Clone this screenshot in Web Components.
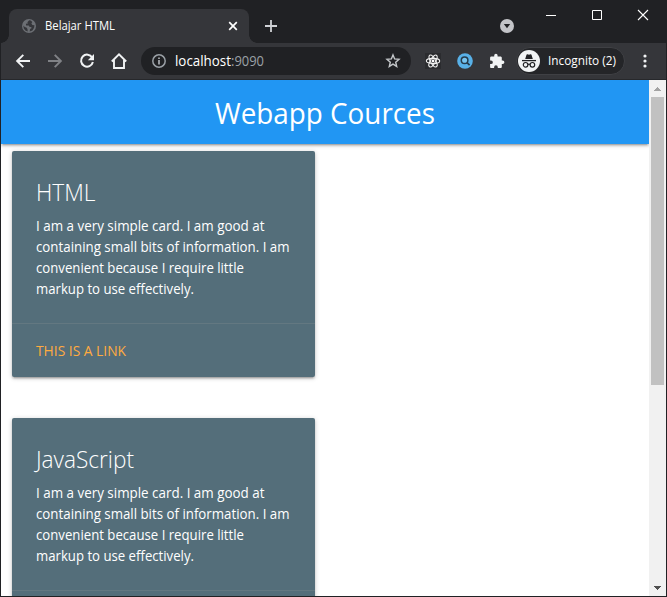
<!DOCTYPE html>
<html lang="en"><head><meta charset="utf-8"><title>Belajar HTML</title>
<style>
html,body{margin:0;height:100%;overflow:hidden;background:#202124}
body{font-family:"Open Sans","Noto Sans",sans-serif;color:#fff}
</style></head><body>
<browser-window></browser-window>
<script>
const define = (name, html, ready) => {
  const t = document.createElement('template');
  t.innerHTML = html;
  customElements.define(name, class extends HTMLElement {
    constructor() { super(); this.attachShadow({mode:'open'}).appendChild(t.content.cloneNode(true)); }
    connectedCallback() { if (ready) ready(this, this.shadowRoot); }
  });
};

/* A single line of text condensed to the width given in its "w" attribute */
define('fit-line', `<style>:host{display:block;white-space:nowrap}span{display:inline-block;transform-origin:0 50%}</style><span><slot></slot></span>`,
  (el, root) => {
    const s = root.querySelector('span');
    el.style.width = el.getAttribute('w') + 'px';
    s.style.transform = 'none';
    const n = s.getBoundingClientRect().width;
    if (n) s.style.transform = `scaleX(${+el.getAttribute('w') / n})`;
  });

const icons = {
  globe: [14,14,'<circle cx="7" cy="7" r="7" fill="#6c6f74"/><path d="M7.2 1.2L5.4 3.2l.5 1.4-2 .2.2 1.6h2.6l1 1.6h1.6l.2 1.3-1.4.8-.4 2.3 2.7-1 1.7-2.6.4-2.5-2.1-.3-1-1.6.9-1.5-1.6-1.5zM1.3 6.6l1.5 1.4 2 .8.7 1.5.2 2.2-2.3-1.1-1.6-2z" fill="#35363a"/>'],
  close: [16,16,'<path d="M4.2 4.2l7.6 7.6m0-7.6l-7.6 7.6" stroke="#fff" stroke-width="1.7"/>'],
  plus: [14,14,'<path d="M7 1v12M1 7h12" stroke="#d0d2d6" stroke-width="1.8"/>'],
  drop: [14,14,'<circle cx="7" cy="7" r="7" fill="#c3c4c8"/><path d="M3.8 5h6.4L7 9.3z" fill="#202124"/>'],
  min: [12,12,'<path d="M1 6.5h10" stroke="#fff"/>'],
  max: [12,12,'<path d="M1.5 1.5h9v9h-9z" fill="none" stroke="#fff"/>'],
  exit: [12,12,'<path d="M1 1l10 10M11 1L1 11" stroke="#fff" stroke-width="1.1"/>'],
  back: [16,16,'<path d="M15 8H2.2M8.3 1.8L2.1 8l6.2 6.2" fill="none" stroke="#f1f3f4" stroke-width="1.9"/>'],
  fwd: [16,16,'<path d="M1 8h12.8M7.7 1.8L13.9 8l-6.2 6.2" fill="none" stroke="#808286" stroke-width="1.9"/>'],
  reload: [16,16,'<path d="M13.2 4.5A6 6 0 1 0 13.9 9" fill="none" stroke="#f1f3f4" stroke-width="2"/><path d="M15 1v6.2H8.8z" fill="#f1f3f4"/>'],
  home: [18,18,'<path d="M1.8 9.5L9 2.3l7.2 7.2M4 8v8h10V8" fill="none" stroke="#f1f3f4" stroke-width="1.9"/>'],
  info: [14,14,'<circle cx="7" cy="7" r="6.2" fill="none" stroke="#9aa0a6" stroke-width="1.5"/><path d="M7 6v4.6M7 3.4v1.6" stroke="#b3b7bc" stroke-width="1.6"/>'],
  star: [16,16,'<path d="M8 1.9l1.65 4.05 4.35.35-3.3 2.85 1 4.25L8 11.1l-3.7 2.3 1-4.25L2 6.3l4.35-.35z" fill="none" stroke="#c4c7ca" stroke-width="1.4"/>'],
  react: [16,16,'<rect width="16" height="16" fill="#2b2c2f"/><g fill="none" stroke="#f2f2f2" stroke-width="1.1"><ellipse cx="8" cy="8" rx="6.7" ry="2.6"/><ellipse cx="8" cy="8" rx="6.7" ry="2.6" transform="rotate(60 8 8)"/><ellipse cx="8" cy="8" rx="6.7" ry="2.6" transform="rotate(120 8 8)"/></g><circle cx="8" cy="8" r="1.4" fill="#fff"/>'],
  find: [16,16,'<circle cx="8" cy="8" r="7.8" fill="#58b1e8"/><circle cx="7.6" cy="7.2" r="3.3" fill="#76c4f0" stroke="#263b4b" stroke-width="1.5"/><path d="M10 9.7l2.6 2.5" stroke="#263b4b" stroke-width="1.7"/>'],
  puzzle: [16,16,'<path d="M13.7 7.6h-.9V4.7c0-.7-.6-1.3-1.3-1.3H8.600V2.500a1.700 1.700 0 0 0-3.400 0v.9H2.300C1.600 3.400 1.100 4 1.100 4.700v2.700H2a1.850 1.850 0 0 1 0 3.700h-.9v2.800c0 .7.5 1.200 1.200 1.200h2.800v-.9a1.850 1.850 0 0 1 3.700 0v.9h2.700c.7 0 1.300-.5 1.300-1.200V11h.9a1.700 1.700 0 0 0 0-3.400z" fill="#f1f3f4"/>'],
  spy: [22,22,'<circle cx="11" cy="11" r="11" fill="#f1f3f4"/><path d="M7.200 9l1.300-4.200c.15-.5.6-.7 1-.5l1.500.5 1.500-.5c.4-.2.85 0 1 .5L14.800 9z" fill="#202124"/><path d="M4 10.600h14" stroke="#202124" stroke-width="1.300"/><g fill="none" stroke="#202124" stroke-width="1.200"><circle cx="7.600" cy="14.800" r="2.300"/><circle cx="14.400" cy="14.800" r="2.300"/><path d="M9.900 14.500q1.100-.7 2.200 0"/></g>'],
  dots: [4,16,'<g fill="#f1f3f4"><circle cx="2" cy="3" r="1.600"/><circle cx="2" cy="8" r="1.600"/><circle cx="2" cy="13" r="1.600"/></g>'],
  up: [7,4,'<path d="M3 0h1v1h1v1h1v1h1v1H0V3h1V2h1V1h1z" fill="#a3a3a3"/>'],
  down: [7,4,'<path d="M0 0h7v1H6v1H5v1H4v1H3V3H2V2H1V1H0z" fill="#505050"/>']
};
define('ui-icon', `<style>:host{display:inline-flex;align-items:center;justify-content:center;flex:none}svg{display:block}</style>`,
  (el, root) => {
    if (root.querySelector('svg')) return;
    const [w,h,p] = icons[el.getAttribute('name')];
    root.innerHTML += `<svg width="${w}" height="${h}" viewBox="0 0 ${w} ${h}">${p}</svg>`;
  });

define('tab-strip', `<style>
:host{display:flex;height:43px;background:#202124;box-sizing:border-box;padding-left:8px}
.tab{width:240px;height:34px;margin-top:9px;background:#35363a;border-radius:8px 8px 0 0;display:flex;align-items:center;box-sizing:border-box;padding:0 8px 0 13px;position:relative;font-size:12px;line-height:34px}
.tab::before,.tab::after{content:"";position:absolute;bottom:0;width:8px;height:8px}
.tab::before{left:-8px;background:radial-gradient(circle at 0 0,transparent 7.5px,#35363a 8px)}
.tab::after{right:-8px;background:radial-gradient(circle at 100% 0,transparent 7.5px,#35363a 8px)}
.tab fit-line{margin:0 auto 0 9px}
.plus{margin:19px 0 0 15px;height:14px}
.drop{margin:19px 31px 0 auto;height:14px}
.win{display:flex;height:30px;align-items:center;gap:34px;margin-right:17px}
</style>
<div class="tab"><ui-icon name="globe"></ui-icon><fit-line w="70">Belajar HTML</fit-line><ui-icon name="close"></ui-icon></div>
<ui-icon class="plus" name="plus"></ui-icon><ui-icon class="drop" name="drop"></ui-icon>
<div class="win"><ui-icon name="min"></ui-icon><ui-icon name="max"></ui-icon><ui-icon name="exit"></ui-icon></div>`);

define('tool-bar', `<style>
:host{display:flex;height:37px;background:#35363a;box-sizing:border-box;padding-left:6px;align-items:center;border-bottom:1px solid #27282b}
.b{width:32px}
.url{width:270px;height:28px;border-radius:14px;background:#202124;margin:0 6px;display:flex;align-items:center;box-sizing:border-box;padding:0 10px 0 11px;font-size:14px;line-height:28px}
.url .h{margin-left:9px}.port{color:#9aa0a6;margin-right:auto}
.chip{margin-left:3px;width:109px;height:28px;border:1px solid #3f4044;border-radius:14px;background:#242528;box-sizing:border-box;display:flex;align-items:center;padding-left:1px;gap:8px;font-size:12px;line-height:26px}
.dots{margin-left:18px}
</style>
<ui-icon class="b" name="back"></ui-icon><ui-icon class="b" name="fwd"></ui-icon><ui-icon class="b" name="reload"></ui-icon><ui-icon class="b" name="home"></ui-icon>
<div class="url"><ui-icon name="info"></ui-icon><fit-line class="h" w="56">localhost</fit-line><fit-line class="port" w="33">:9090</fit-line><ui-icon name="star"></ui-icon></div>
<ui-icon class="b" name="react"></ui-icon><ui-icon class="b" name="find"></ui-icon><ui-icon class="b" name="puzzle"></ui-icon>
<div class="chip"><ui-icon name="spy"></ui-icon><fit-line w="68">Incognito (2)</fit-line></div><ui-icon class="dots" name="dots"></ui-icon>`);

define('nav-header', `<style>:host{display:flex;justify-content:center;height:64px;line-height:67px;font-size:28.500px;background:#2196f3;position:relative;box-shadow:0 2px 2px 0 rgba(0,0,0,.14),0 3px 1px -2px rgba(0,0,0,.12),0 1px 5px 0 rgba(0,0,0,.2)}</style><fit-line w="220"><slot></slot></fit-line>`);

define('course-card', `<style>
:host{display:block;width:303px;height:226px;background:#546e7a;border-radius:2px;margin:0 0 41px 11px;font-size:14px;font-weight:450;line-height:21px;box-shadow:0 2px 2px 0 rgba(0,0,0,.14),0 3px 1px -2px rgba(0,0,0,.12),0 1px 5px 0 rgba(0,0,0,.2)}
.content{padding:24px 24px 24px 23.500px}
.title{font-size:24px;font-weight:300;line-height:32px;padding-top:1px;margin-bottom:7px}
.action{border-top:1px solid rgba(160,160,160,.2);padding:16px 23.500px;color:#ffab40}
</style>
<div class="content"><div class="title"><slot name="title"></slot></div>
<fit-line w="228.500">I am a very simple card. I am good at</fit-line>
<fit-line w="253.500">containing small bits of information. I am</fit-line>
<fit-line w="208">convenient because I require little</fit-line>
<fit-line w="158">markup to use effectively.</fit-line></div>
<div class="action"><slot name="link"></slot></div>`);

define('scroll-bar', `<style>:host{width:17px;background:#f1f1f1;display:flex;flex-direction:column;align-items:center;flex:none}
.a{height:17px}.thumb{width:13px;height:288px;background:#c1c1c1;margin-bottom:auto}</style>
<ui-icon class="a" name="up"></ui-icon><div class="thumb"></div><ui-icon class="a" name="down"></ui-icon>`);

define('browser-window', `<style>
:host{display:flex;flex-direction:column;width:667px;height:597px;box-sizing:border-box;border:solid #202124;border-width:0 1px 1px;overflow:hidden}
.view{display:flex;flex:1;min-height:0;background:#fff}
.page{flex:1;overflow:hidden}
.cards{padding-top:7px}
</style>
<tab-strip></tab-strip><tool-bar></tool-bar>
<div class="view"><div class="page"><nav-header>Webapp Cources</nav-header>
<div class="cards">
<course-card><fit-line slot="title" w="59.500">HTML</fit-line><fit-line slot="link" w="90">THIS IS A LINK</fit-line></course-card>
<course-card><fit-line slot="title" w="98">JavaScript</fit-line></course-card>
</div></div><scroll-bar></scroll-bar></div>`);
</script></body></html>
